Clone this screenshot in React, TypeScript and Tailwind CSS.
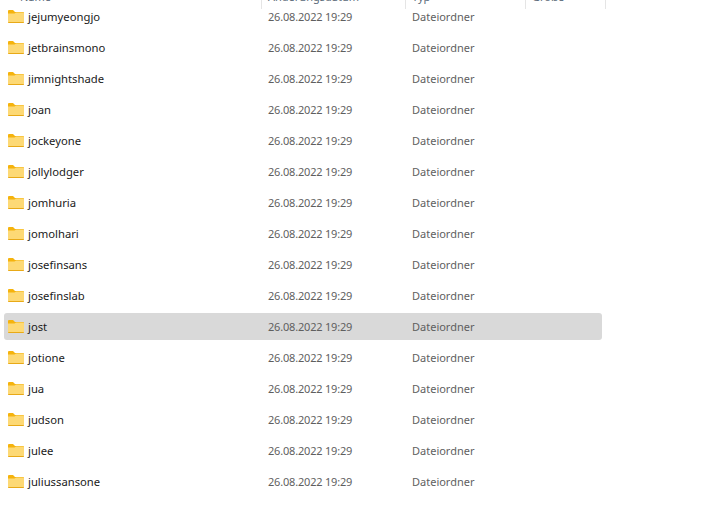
const folders = [
  'jejumyeongjo',
  'jetbrainsmono',
  'jimnightshade',
  'joan',
  'jockeyone',
  'jollylodger',
  'jomhuria',
  'jomolhari',
  'josefinsans',
  'josefinslab',
  'jost',
  'jotione',
  'jua',
  'judson',
  'julee',
  'juliussansone',
];

function FolderIcon() {
  return (
    <svg width="16" height="13" viewBox="0 0 16 13" className="shrink-0">
      <path d="M0 1a1 1 0 0 1 1-1h4l2 2h8a1 1 0 0 1 1 1v3H0z" fill="#f5b30d" />
      <path d="M0 3.5h6.5l1.6-1h6.9a1 1 0 0 1 1 1V12a1 1 0 0 1-1 1H1a1 1 0 0 1-1-1z" fill="#fdd975" />
      <path d="M0 12h16a1 1 0 0 1-1 1H1a1 1 0 0 1-1-1z" fill="#e8a917" />
    </svg>
  );
}

export default function App() {
  return (
    <div className="h-[505px] w-[703px] overflow-hidden bg-white font-['Noto_Sans',sans-serif] text-[11px]">
      <div className="flex h-[9px] overflow-hidden text-[#5c6b7a]">
        <div className="h-full w-[262px] border-r border-[#e5e5e5] pl-[20px]"><span className="-mt-[11px] block leading-[15px]">Name</span></div>
        <div className="h-full w-[144px] border-r border-[#e5e5e5] pl-[6px]"><span className="-mt-[11px] block leading-[15px]">Änderungsdatum</span></div>
        <div className="h-full w-[120px] border-r border-[#e5e5e5] pl-[6px]"><span className="-mt-[11px] block leading-[15px]">Typ</span></div>
        <div className="h-full w-[80px] border-r border-[#e5e5e5] pl-[6px]"><span className="-mt-[11px] block leading-[15px]">Größe</span></div>
      </div>
      <ul className="-mt-[6px] flex flex-col gap-[4px] pl-[4px]">
        {folders.map((name) => (
          <li
            key={name}
            className={`flex h-[27px] w-[598px] items-center rounded-[3px] ${name === 'jost' ? 'bg-[#d9d9d9]' : ''}`}
          >
            <div className="flex w-[258px] items-center gap-[4px] pl-[4px] text-[11.25px] text-[#1a1a1a]">
              <FolderIcon />
              <span className="pt-[2px]">{name}</span>
            </div>
            <div className="w-[144px] pl-[6px] pt-[2px] tracking-[-0.19px] text-[#5f5f5f]">26.08.2022 19:29</div>
            <div className="pl-[6px] pt-[2px] text-[#5f5f5f]">Dateiordner</div>
          </li>
        ))}
      </ul>
    </div>
  );
}
